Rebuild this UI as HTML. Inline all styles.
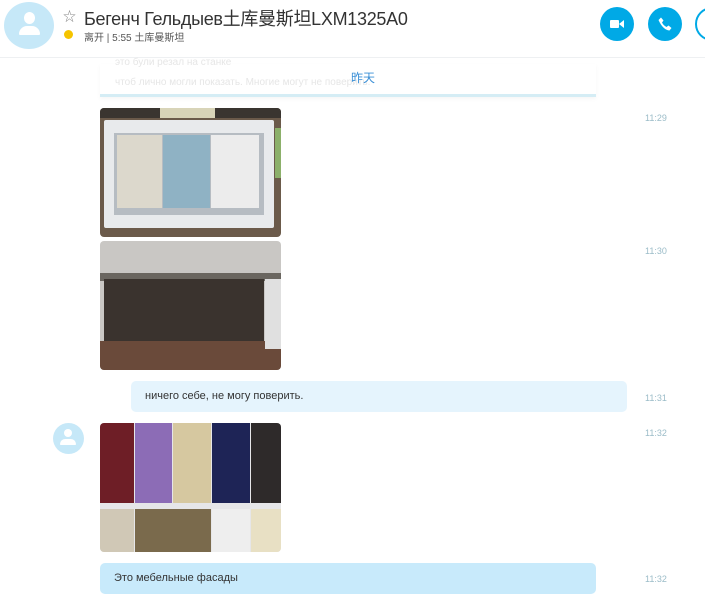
<!DOCTYPE html>
<html><head><meta charset="utf-8">
<style>
body{margin:0;width:705px;height:607px;overflow:hidden;background:#fff;font-family:"Liberation Sans","Noto Sans CJK SC",sans-serif;position:relative}
.a{position:absolute}
.t{position:absolute;font-size:9px;color:#9bbcc8;left:645px}
.bub{position:absolute;border-radius:5px;font-size:11px;color:#333;padding-left:14px;box-sizing:border-box;line-height:31px}
</style></head><body>
<div class="a" style="left:4px;top:2px;width:50px;height:47px;border-radius:50%;background:#c6e8f8"></div>
<div class="a" style="left:24px;top:12px;width:11px;height:12px;border-radius:50%;background:#fff"></div>
<div class="a" style="left:19px;top:26px;width:21px;height:9px;border-radius:8px 8px 1px 1px;background:#fff"></div>
<div class="a" style="left:63px;top:6px;font-size:13px;color:#888">☆</div>
<div class="a" style="left:84px;top:5px;font-size:18px;color:#333;letter-spacing:-0.3px">Бегенч Гельдыев土库曼斯坦LXM1325A0</div>
<div class="a" style="left:64px;top:30px;width:9px;height:9px;border-radius:50%;background:#f5c400"></div>
<div class="a" style="left:84px;top:29px;font-size:10px;color:#555">离开 | 5:55 土库曼斯坦</div>
<div class="a" style="left:600px;top:7px;width:34px;height:34px;border-radius:50%;background:#00a9e6"></div>
<div class="a" style="left:610px;top:20px;width:9px;height:8px;background:#fff;border-radius:1px"></div>
<div class="a" style="left:619px;top:20px;width:0;height:0;border-top:4px solid transparent;border-bottom:4px solid transparent;border-right:5px solid #fff"></div>
<div class="a" style="left:648px;top:7px;width:34px;height:34px;border-radius:50%;background:#00a9e6"></div>
<svg class="a" style="left:657px;top:16px" width="16" height="16" viewBox="0 0 16 16"><path d="M4 1.5 L6.5 4.5 L5 6.5 Q6.5 9.5 9.5 11 L11.5 9.5 L14.5 12 L12.5 14.5 Q6 14 1.5 4 Z" fill="#fff"/></svg>
<div class="a" style="left:695px;top:7px;width:30px;height:30px;border-radius:50%;border:2px solid #00a9e6"></div>
<div class="a" style="left:0;top:57px;width:705px;height:1px;background:#eef0f2"></div>
<div class="a" style="left:100px;top:64px;width:496px;height:30px;background:#fff;border-bottom:3px solid #d5edf5;box-shadow:0 2px 4px rgba(0,0,0,.04)"></div>
<div class="a" style="left:115px;top:57px;font-size:10px;color:#e6e6e6">это були резал на станке</div>
<div class="a" style="left:115px;top:77px;font-size:10px;color:#e6e6e6">чтоб лично могли показать. Многие могут не поверить.</div>
<div class="a" style="left:351px;top:69px;font-size:12px;color:#3a8fd6">昨天</div>

<div class="a" style="left:100px;top:108px;width:181px;height:129px;border-radius:4px;overflow:hidden;background:#6b5a4a">
 <div class="a" style="left:0;top:0;width:181px;height:10px;background:#3a3530"></div>
 <div class="a" style="left:60px;top:0;width:55px;height:10px;background:#d8d4b8"></div>
 <div class="a" style="left:4px;top:12px;width:170px;height:108px;background:#e8eaec;border-radius:2px"></div>
 <div class="a" style="left:14px;top:25px;width:150px;height:82px;background:#b6bcc2"></div>
 <div class="a" style="left:17px;top:27px;width:45px;height:73px;background:#dcd8cc"></div>
 <div class="a" style="left:63px;top:27px;width:47px;height:73px;background:#8fb2c4"></div>
 <div class="a" style="left:111px;top:27px;width:48px;height:73px;background:#ececec"></div>
 <div class="a" style="left:175px;top:20px;width:6px;height:50px;background:#8cb06a"></div>
</div>
<div class="a" style="left:100px;top:241px;width:181px;height:129px;border-radius:4px;overflow:hidden;background:#c9c7c4">
 <div class="a" style="left:0;top:32px;width:181px;height:8px;background:#6a6660"></div>
 <div class="a" style="left:4px;top:38px;width:160px;height:70px;background:#3a332e"></div>
 <div class="a" style="left:0;top:100px;width:181px;height:29px;background:#6a4a3a"></div>
 <div class="a" style="left:165px;top:38px;width:16px;height:70px;background:#e0e0e0"></div>
</div>
<div class="bub" style="left:131px;top:381px;width:496px;background:#e5f4fd">ничего себе, не могу поверить.</div>

<div class="a" style="left:53px;top:423px;width:31px;height:31px;border-radius:50%;background:#c6e8f8"></div>
<div class="a" style="left:64px;top:429px;width:8px;height:8px;border-radius:50%;background:#fff"></div>
<div class="a" style="left:60px;top:439px;width:16px;height:6px;border-radius:6px 6px 1px 1px;background:#fff"></div>
<div class="a" style="left:100px;top:423px;width:181px;height:129px;border-radius:4px;overflow:hidden;background:#e6e6e8">
 <div class="a" style="left:0;top:0;width:34px;height:80px;background:#6e1e26"></div>
 <div class="a" style="left:35px;top:0;width:37px;height:80px;background:#8c6cb6"></div>
 <div class="a" style="left:73px;top:0;width:38px;height:80px;background:#d6c8a0"></div>
 <div class="a" style="left:112px;top:0;width:38px;height:80px;background:#1e2456"></div>
 <div class="a" style="left:151px;top:0;width:30px;height:80px;background:#2e2a2a"></div>
 <div class="a" style="left:0;top:86px;width:34px;height:43px;background:#d0c8b6"></div>
 <div class="a" style="left:35px;top:86px;width:76px;height:43px;background:#7a6a4c"></div>
 <div class="a" style="left:112px;top:86px;width:38px;height:43px;background:#eeeeee"></div>
 <div class="a" style="left:151px;top:86px;width:30px;height:43px;background:#e8e0c4"></div>
</div>
<div class="bub" style="left:100px;top:563px;width:496px;background:#c8eafb">Это мебельные фасады</div>

<div class="t" style="top:113px">11:29</div>
<div class="t" style="top:246px">11:30</div>
<div class="t" style="top:393px">11:31</div>
<div class="t" style="top:428px">11:32</div>
<div class="t" style="top:574px">11:32</div>
</body></html>
